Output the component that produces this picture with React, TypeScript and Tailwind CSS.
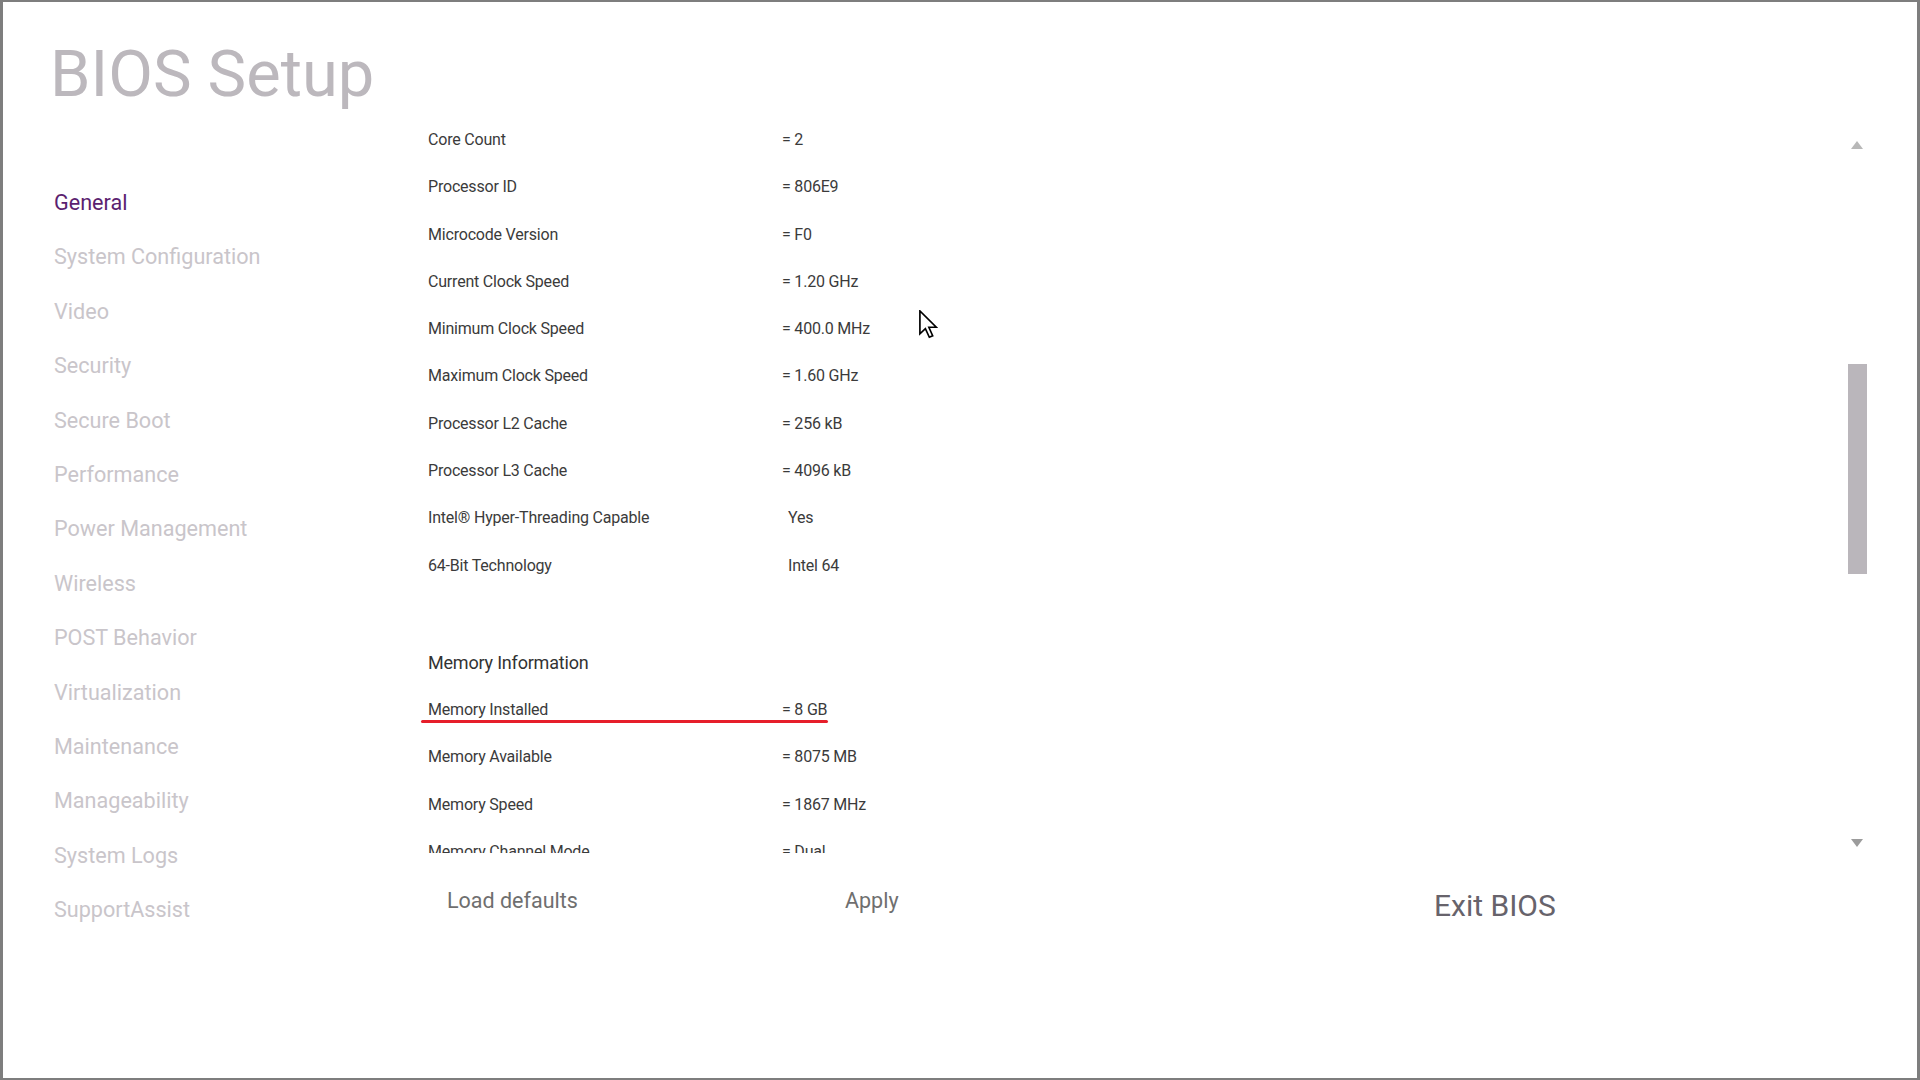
import React from 'react';

const navItems = [
  'General',
  'System Configuration',
  'Video',
  'Security',
  'Secure Boot',
  'Performance',
  'Power Management',
  'Wireless',
  'POST Behavior',
  'Virtualization',
  'Maintenance',
  'Manageability',
  'System Logs',
  'SupportAssist',
];

interface Row {
  label: string;
  value: string;
  plain?: boolean;
  marked?: boolean;
}

const cpuRows: Row[] = [
  { label: 'Core Count', value: '= 2' },
  { label: 'Processor ID', value: '= 806E9' },
  { label: 'Microcode Version', value: '= F0' },
  { label: 'Current Clock Speed', value: '= 1.20 GHz' },
  { label: 'Minimum Clock Speed', value: '= 400.0 MHz' },
  { label: 'Maximum Clock Speed', value: '= 1.60 GHz' },
  { label: 'Processor L2 Cache', value: '= 256 kB' },
  { label: 'Processor L3 Cache', value: '= 4096 kB' },
  { label: 'Intel® Hyper-Threading Capable', value: 'Yes', plain: true },
  { label: '64-Bit Technology', value: 'Intel 64', plain: true },
];

const memRows: Row[] = [
  { label: 'Memory Installed', value: '= 8 GB', marked: true },
  { label: 'Memory Available', value: '= 8075 MB' },
  { label: 'Memory Speed', value: '= 1867 MHz' },
  { label: 'Memory Channel Mode', value: '= Dual' },
];

function InfoRow({ row }: { row: Row }) {
  return (
    <div className="relative flex h-[47.3px] leading-[47.3px] text-[16px] tracking-[-0.2px] text-[#3b3b3b]">
      <div className="w-[354px]">{row.label}</div>
      <div className={row.plain ? 'pl-[6px]' : ''}>{row.value}</div>
      {row.marked && (
        <div className="absolute -left-[7px] top-[34.5px] h-[3px] w-[407px] rounded-full bg-[#e61e2a]" />
      )}
    </div>
  );
}

function Cursor() {
  return (
    <svg
      className="absolute left-[916px] top-[308px]"
      width="19"
      height="29"
      viewBox="0 0 12.5 19"
    >
      <path
        d="M0.6 0.6 L0.6 15.6 L4.2 12.2 L6.8 17.9 L9 16.9 L6.5 11.3 L11.4 11.3 Z"
        fill="#fff"
        stroke="#000"
        strokeWidth="1.1"
        strokeLinejoin="miter"
      />
    </svg>
  );
}

export default function App() {
  return (
    <div
      className="relative flex h-[1080px] w-[1920px] overflow-hidden border-t-2 border-b-2 border-l-[3px] border-r-[3px] border-[#7e7e7e] bg-white"
      style={{ fontFamily: 'Roboto, "Open Sans", sans-serif' }}
    >
      <div className="w-[425px] shrink-0 pt-[40px]">
        <h1 className="pl-[47px] text-[65px] leading-none font-normal text-[#bcb8bd]">BIOS Setup</h1>
        <nav className="mt-[69px] pl-[51px]">
          {navItems.map((item, i) => (
            <div
              key={item}
              className={
                'text-[21.6px] leading-[54.4px] ' +
                (i === 0 ? 'text-[#5c1f70]' : 'text-[#c9c5ca]')
              }
            >
              {item}
            </div>
          ))}
        </nav>
      </div>

      <div className="flex flex-1 flex-col pt-[114px]">
        <div className="flex h-[737px]">
          <div className="-ml-[12px] flex-1 overflow-hidden pl-[12px]">
            {cpuRows.map((row) => (
              <InfoRow key={row.label} row={row} />
            ))}
            <div className="pt-[62px] pb-[11px] text-[18px] leading-[24px] tracking-[-0.2px] text-[#333333]">
              Memory Information
            </div>
            {memRows.map((row) => (
              <InfoRow key={row.label} row={row} />
            ))}
          </div>
          <div className="mr-[50px] flex w-[20px] flex-col items-center pt-[25px]">
            <div className="h-0 w-0 border-x-[6px] border-b-[8px] border-x-transparent border-b-[#b8b8b8]" />
            <div className="mt-[215px] h-[210px] w-[19px] bg-[#bab6bb]" />
            <div className="mt-[265px] h-0 w-0 border-x-[6px] border-t-[8px] border-x-transparent border-t-[#9c9c9c]" />
          </div>
        </div>

        <div className="mt-[33px] flex items-start">
          <div className="w-[417px] pl-[19px] text-[21.5px] leading-[30px] text-[#6f6f6f]">Load defaults</div>
          <div className="w-[589px] text-[21.5px] leading-[30px] text-[#6f6f6f]">Apply</div>
          <div className="mt-[2px] text-[30px] leading-[36px] text-[#67636b]">Exit BIOS</div>
        </div>
      </div>

      <Cursor />
    </div>
  );
}
